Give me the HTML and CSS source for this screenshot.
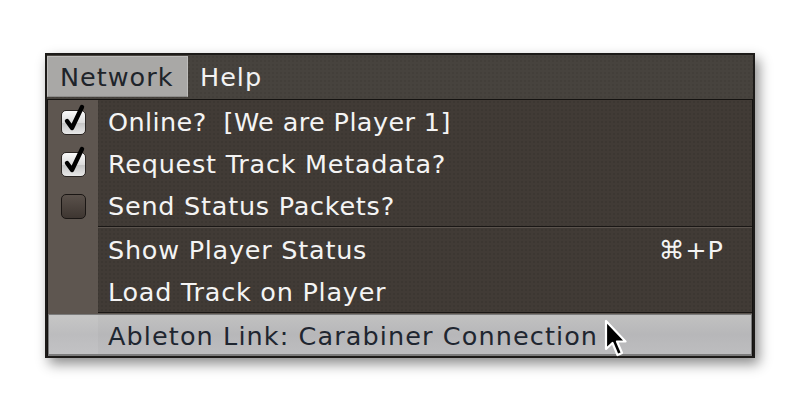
FILE: index.html
```html
<!DOCTYPE html>
<html>
<head>
<meta charset="utf-8">
<link rel="stylesheet" href="styles.css">
</head>
<body>
<div class="window">
  <div class="menubar">
    <div class="menu-title active">Network</div>
    <div class="menu-title">Help</div>
  </div>
  <div class="dropdown">
    <div class="item">
      <div class="gutter"><span class="check on"><svg viewBox="0 0 26 30" width="26" height="30"><path d="M6 17 L11 24 L21 3" fill="none" stroke="#000" stroke-width="4.4" stroke-linecap="round" stroke-linejoin="round"/></svg></span></div>
      <div class="label tight">Online?&nbsp; [We are Player 1]</div>
    </div>
    <div class="item">
      <div class="gutter"><span class="check on"><svg viewBox="0 0 26 30" width="26" height="30"><path d="M6 17 L11 24 L21 3" fill="none" stroke="#000" stroke-width="4.4" stroke-linecap="round" stroke-linejoin="round"/></svg></span></div>
      <div class="label">Request Track Metadata?</div>
    </div>
    <div class="item">
      <div class="gutter"><span class="check off"></span></div>
      <div class="label">Send Status Packets?</div>
    </div>
    <div class="sep"><div class="gutter-sep"></div><div class="line"></div></div>
    <div class="item">
      <div class="gutter"></div>
      <div class="label">Show Player Status</div>
      <div class="shortcut">⌘+P</div>
    </div>
    <div class="item">
      <div class="gutter"></div>
      <div class="label">Load Track on Player</div>
    </div>
    <div class="sep"><div class="gutter-sep"></div><div class="line"></div></div>
    <div class="item selected">
      <div class="gutter"></div>
      <div class="label wide">Ableton Link: Carabiner Connection</div>
      <svg class="cursor" viewBox="0 0 24 40" width="24" height="40"><path d="M2 2 L2 30 L8.5 24 L13.5 36 L18 34 L13 22.5 L21.5 22.5 Z" fill="#000" stroke="#fff" stroke-width="2.2" stroke-linejoin="round"/></svg>
    </div>
  </div>
</div>
</body>
</html>
```
FILE: styles.css
```css
html, body {
  margin: 0;
  padding: 0;
  background: #ffffff;
}
body {
  font-family: "DejaVu Sans", "Liberation Sans", sans-serif;
  width: 800px;
  height: 410px;
  overflow: hidden;
}
.window {
  margin: 53px 0 0 45px;
  width: 706px;
  height: 301px;
  border: 2px solid #1d1b19;
  background-color: #47433e;
  background-image: radial-gradient(rgba(0,0,0,0.06) 0.8px, transparent 1.2px);
  background-size: 4px 4px;
  box-shadow: 4px 6px 12px rgba(0,0,0,0.45);
  display: flex;
  flex-direction: column;
}
.menubar {
  height: 44px;
  display: flex;
  align-items: stretch;
  padding: 1px 0 0 0;
  box-sizing: border-box;
}
.menu-title {
  font-size: 25.5px;
  letter-spacing: 1px;
  color: #f2f2f2;
  padding: 0 12px 0 12px;
  display: flex;
  align-items: center;
  height: 41px;
}
.menu-title.active {
  background: #a9a8a6;
  color: #1e242a;
  width: 141px;
  box-sizing: border-box;
  border: 1px solid #bebdbb;
  border-bottom-color: #8d8c8a;
}
.dropdown {
  flex: 1;
  border-top: 1px solid #141210;
  border-left: 1px solid #141210;
  border-right: 1px solid #141210;
  background-color: #413b36;
  background-image: radial-gradient(rgba(0,0,0,0.07) 0.8px, transparent 1.2px);
  background-size: 4px 4px;
  display: flex;
  flex-direction: column;
}
.item {
  height: 42px;
  display: flex;
  align-items: center;
  position: relative;
}
.gutter {
  width: 50px;
  align-self: stretch;
  background: #5e5650;
  display: flex;
  align-items: center;
  justify-content: center;
  flex: none;
}
.label {
  font-size: 25.5px;
  letter-spacing: 0.75px;
  color: #f4f4f4;
  padding-left: 10px;
  padding-top: 2px;
  white-space: nowrap;
}
.label.tight {
  letter-spacing: 0.4px;
}
.label.wide {
  letter-spacing: 1.1px;
}
.shortcut {
  margin-left: auto;
  margin-right: 28px;
  font-size: 25.5px;
  letter-spacing: 1px;
  color: #f4f4f4;
  padding-top: 2px;
}
.check {
  width: 25px;
  height: 25px;
  box-sizing: border-box;
  border-radius: 5px;
  position: relative;
  margin-left: 1px;
  margin-top: 2px;
}
.check.on {
  background: linear-gradient(#fafafa 0%, #dcdcdc 50%, #c4c4c4 52%, #e8e8e8 100%);
  border: 1px solid #2a2522;
}
.check.on svg {
  position: absolute;
  left: -1px;
  top: -7px;
}
.check.off {
  background: linear-gradient(#5a514b, #3e3631);
  border: 1.5px solid #1a1614;
}
.sep {
  height: 2px;
  display: flex;
}
.gutter-sep {
  width: 50px;
  background: #5e5650;
}
.line {
  flex: 1;
  background: linear-gradient(#1a1715 50%, #5a534d 50%);
}
.item.selected {
  background: linear-gradient(#c1c1c1, #b7b7b9 50%, #bdbdbf 100%);
  border: 1px solid #7b7b7b;
  border-bottom-width: 2px;
  height: 42px;
  box-sizing: border-box;
}
.item.selected .gutter {
  background: rgba(255,255,255,0.08);
  width: 49px;
}
.item.selected .label {
  color: #1f2630;
}
.cursor {
  position: absolute;
  left: 555px;
  top: 4px;
}
```
